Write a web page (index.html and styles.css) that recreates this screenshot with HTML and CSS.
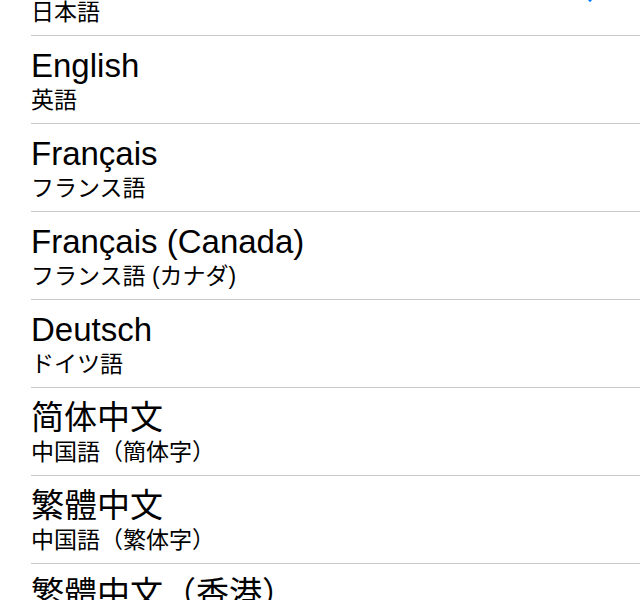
FILE: index.html
```html
<!doctype html>
<html lang="ja">
<head>
    <title>言語</title>
    <link rel="stylesheet" href="styles.css">
</head>
<body>
    <ul class="idiomas">
        <li class="idioma">
            <div class="texto">
                <div class="nombre">日本語</div>
                <div class="traduccion">日本語</div>
            </div>
            <svg class="marca" width="28" height="22" viewBox="0 0 28 22">
                <path d="M2 12 L10 20 L26 2" fill="none" stroke="#007aff" stroke-width="3"/>
            </svg>
        </li>
        <li class="idioma">
            <div class="texto">
                <div class="nombre">English</div>
                <div class="traduccion">英語</div>
            </div>
        </li>
        <li class="idioma">
            <div class="texto">
                <div class="nombre">Français</div>
                <div class="traduccion">フランス語</div>
            </div>
        </li>
        <li class="idioma">
            <div class="texto">
                <div class="nombre">Français (Canada)</div>
                <div class="traduccion">フランス語 (カナダ)</div>
            </div>
        </li>
        <li class="idioma">
            <div class="texto">
                <div class="nombre">Deutsch</div>
                <div class="traduccion">ドイツ語</div>
            </div>
        </li>
        <li class="idioma">
            <div class="texto">
                <div class="nombre">简体中文</div>
                <div class="traduccion">中国語（簡体字）</div>
            </div>
        </li>
        <li class="idioma">
            <div class="texto">
                <div class="nombre">繁體中文</div>
                <div class="traduccion">中国語（繁体字）</div>
            </div>
        </li>
        <li class="idioma">
            <div class="texto">
                <div class="nombre">繁體中文（香港）</div>
                <div class="traduccion">中国語（繁体字、香港）</div>
            </div>
        </li>
    </ul>
</body>
</html>
```

FILE: styles.css
```css
* {
    margin: 0;
    padding: 0;
    box-sizing: border-box;
}

html, body {
    height: 100%;
    overflow: hidden;
    background: #fff;
}

body {
    font-family: "Liberation Sans", "Noto Sans CJK JP", sans-serif;
    color: #000;
}

.idiomas {
    list-style-type: none;
    margin-top: -52px;
}

.idioma {
    display: flex;
    align-items: center;
    justify-content: space-between;
    height: 88px;
    margin-left: 31px;
    padding: 12px 32px 0 0;
    border-bottom: 1px solid #c8c7cc;
}

.texto {
    align-self: flex-start;
}

.nombre {
    font-size: 33px;
    line-height: 36px;
}

.traduccion {
    font-size: 23px;
    line-height: 28px;
    margin-top: 2px;
}

.marca {
    display: block;
    margin-top: -14px;
}
```
